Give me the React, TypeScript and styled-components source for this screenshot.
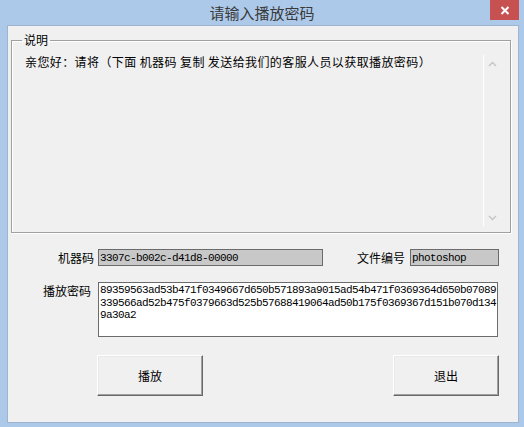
import React from "react";
import styled, { createGlobalStyle } from "styled-components";

const Global = createGlobalStyle`
  html, body { margin: 0; padding: 0; }
  body { width: 524px; height: 427px; overflow: hidden; background: #adc9ea; }
`;

const CJK = `"Noto Sans CJK SC", "Noto Sans", sans-serif`;
const MONO = `"Liberation Mono", "Noto Sans CJK SC", monospace`;

const Window = styled.div`
  width: 524px;
  height: 427px;
  display: flex;
  flex-direction: column;
  background: #adc9ea;
  font-family: ${CJK};
  box-sizing: border-box;
`;

const TitleBar = styled.div`
  height: 25px;
  display: grid;
  grid-template-columns: 1fr auto 1fr;
  align-items: center;
`;

const Title = styled.div`
  grid-column: 2;
  font-size: 15px;
  line-height: 24px;
  color: #3a3a3a;
`;

const CloseButton = styled.div`
  grid-column: 3;
  justify-self: end;
  align-self: start;
  width: 29px;
  height: 20px;
  margin-right: 5px;
  background: #c75050;
  display: flex;
  align-items: center;
  justify-content: center;
`;

const Frame = styled.div`
  flex: 1;
  display: flex;
  padding: 0 5px 4px 7px;
  min-height: 0;
`;

const Client = styled.div`
  flex: 1;
  background: #f0f0f0;
  border: 1px solid #9fb5cf;
  display: flex;
  flex-direction: column;
  min-height: 0;
`;

const Group = styled.fieldset`
  margin: 6px 7px 0 3px;
  padding: 0 10px 6px 6px;
  border: 1px solid #a0a0a0;
  box-shadow: 1px 1px 0 #ffffff, inset 1px 1px 0 #ffffff;
  min-width: 0;
`;

const Legend = styled.legend`
  margin-left: 4px;
  padding: 0 2px;
  font-size: 12px;
  line-height: 16px;
  color: #000;
`;

const DescBox = styled.div`
  margin: 4px 0 0 2px;
  height: 174px;
  display: flex;
`;

const DescText = styled.div`
  flex: 1;
  min-width: 0;
  padding: 2px 0 0 5px;
  font-size: 12px;
  line-height: 16px;
  letter-spacing: 0.4px;
  color: #000;
  white-space: pre;
`;

const ScrollBar = styled.div`
  width: 16px;
  margin-top: 3px;
  border-left: 1px solid #ffffff;
  display: flex;
  flex-direction: column;
  justify-content: space-between;
`;

const Arrow = styled.div`
  height: 17px;
  display: flex;
  align-items: center;
  justify-content: center;
`;

const Row = styled.div<{ $mt: number }>`
  display: flex;
  align-items: flex-start;
  margin-top: ${(p) => p.$mt}px;
`;

const Label = styled.label<{ $width: number; $pr?: number; $pt?: number }>`
  width: ${(p) => p.$width}px;
  box-sizing: border-box;
  text-align: right;
  padding-right: ${(p) => p.$pr ?? 0}px;
  padding-top: ${(p) => p.$pt ?? 0}px;
  font-size: 12px;
  line-height: 17px;
  color: #000;
  flex-shrink: 0;
`;

const Field = styled.input<{ $width: number; $ml: number }>`
  width: ${(p) => p.$width}px;
  height: 17px;
  margin: 0 0 0 ${(p) => p.$ml}px;
  box-sizing: border-box;
  border: 1px solid #6b6b6b;
  background: #c8c8c8;
  padding: 0 0 0 1px;
  font-family: ${MONO};
  font-size: 11px;
  letter-spacing: -0.6px;
  color: #000;
  outline: none;
`;

const PasswordBox = styled.textarea`
  width: 400px;
  height: 55px;
  margin: 0 0 0 4px;
  box-sizing: border-box;
  border: 1px solid #6b6b6b;
  background: #ffffff;
  padding: 1px 0 0 1px;
  font-family: ${MONO};
  font-size: 11px;
  line-height: 12.5px;
  letter-spacing: -0.6px;
  color: #000;
  resize: none;
  overflow: hidden;
  word-break: break-all;
  outline: none;
`;

const ButtonRow = styled.div`
  display: flex;
  gap: 190px;
  padding-left: 89px;
  margin-top: 18px;
`;

const Button = styled.button`
  width: 106px;
  height: 41px;
  box-sizing: border-box;
  background: #f0f0f0;
  border: 1px solid;
  border-color: #ffffff #696969 #696969 #ffffff;
  box-shadow: inset -1px -1px 0 #a0a0a0, inset 1px 1px 0 #e8e8e8;
  font-family: ${CJK};
  font-size: 12px;
  color: #000;
  padding: 0;
`;

const ChevronUp = () => (
  <svg width="9" height="6" viewBox="0 0 9 6">
    <path d="M1 5 L4.5 1.5 L8 5" fill="none" stroke="#c4c4c4" strokeWidth="1.4" />
  </svg>
);

const ChevronDown = () => (
  <svg width="9" height="6" viewBox="0 0 9 6">
    <path d="M1 1 L4.5 4.5 L8 1" fill="none" stroke="#c4c4c4" strokeWidth="1.4" />
  </svg>
);

const password =
  "89359563ad53b471f0349667d650b571893a9015ad54b471f0369364d650b07089" +
  "339566ad52b475f0379663d525b57688419064ad50b175f0369367d151b070d134" +
  "9a30a2";

export default function App() {
  return (
    <>
      <Global />
      <Window>
        <TitleBar>
          <Title>请输入播放密码</Title>
          <CloseButton>
            <svg width="10" height="9" viewBox="0 0 10 9">
              <path d="M1.5 1 L8.5 8 M8.5 1 L1.5 8" stroke="#ffffff" strokeWidth="2" />
            </svg>
          </CloseButton>
        </TitleBar>
        <Frame>
          <Client>
            <Group>
              <Legend>说明</Legend>
              <DescBox>
                <DescText>亲您好：请将（下面 机器码 复制 发送给我们的客服人员以获取播放密码）</DescText>
                <ScrollBar>
                  <Arrow>
                    <ChevronUp />
                  </Arrow>
                  <Arrow>
                    <ChevronDown />
                  </Arrow>
                </ScrollBar>
              </DescBox>
            </Group>
            <Row $mt={16}>
              <Label $width={86}>机器码</Label>
              <Field $width={225} $ml={4} readOnly value="3307c-b002c-d41d8-00000" />
              <Label $width={82}>文件编号</Label>
              <Field $width={89} $ml={5} readOnly value="photoshop" />
            </Row>
            <Row $mt={16}>
              <Label $width={86} $pr={3}>播放密码</Label>
              <PasswordBox readOnly value={password} />
            </Row>
            <ButtonRow>
              <Button>播放</Button>
              <Button>退出</Button>
            </ButtonRow>
          </Client>
        </Frame>
      </Window>
    </>
  );
}
